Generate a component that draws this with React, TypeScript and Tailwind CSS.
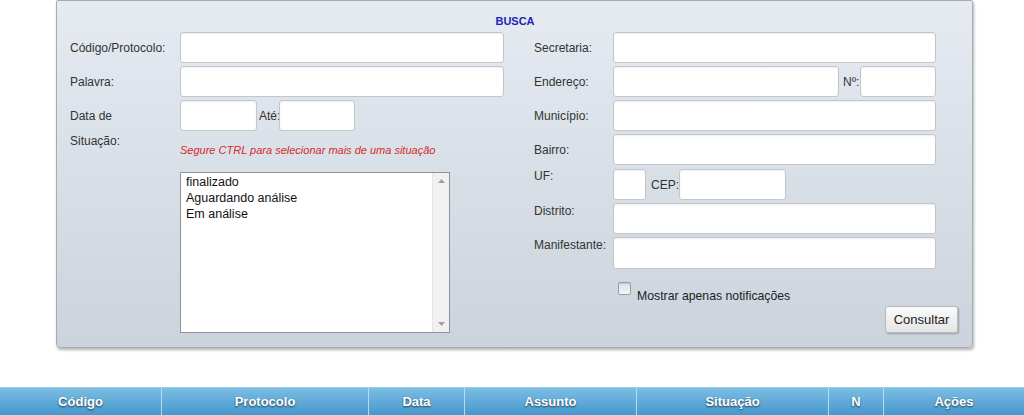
import React from "react";

const inp =
  "h-[31px] bg-white border border-[#c3c7cc] rounded-[3px] shadow-[inset_0_1px_2px_rgba(0,0,0,0.07)] shrink-0";
const lbl = "text-[12px] leading-[14px] text-[#333]";

function Row({ label, lw, children, top }: { label: string; lw: string; children: React.ReactNode; top?: boolean }) {
  return (
    <div className={`flex ${top ? "items-start" : "items-center"}`}>
      <div className={`${lbl} ${lw} shrink-0 ${top ? "pt-[1px]" : ""}`}>{label}</div>
      {children}
    </div>
  );
}

const cols: [string, number][] = [
  ["Código", 162],
  ["Protocolo", 207],
  ["Data", 96],
  ["Assunto", 172],
  ["Situação", 192],
  ["N", 55],
  ["Ações", 140],
];

export default function App() {
  return (
    <div className="w-[1024px] h-[415px] overflow-hidden bg-white font-['Liberation_Sans',Arial,sans-serif]">
      <div className="ml-[56px] w-[917px] h-[348px] rounded-b-[4px] rounded-t-[2px] border border-[#a3abb5] bg-gradient-to-b from-[#e6ebf2] to-[#ccd3dc] shadow-[1px_2px_3px_rgba(0,0,0,0.3)] pt-[13px] pl-[13px]">
        <div className="text-center text-[11px] leading-[14px] font-bold text-[#1f1fb8] pr-[12px]">BUSCA</div>
        <div className="flex mt-[4px]">
          {/* left column */}
          <div className="flex flex-col w-[433px] gap-[3px]">
            <Row label="Código/Protocolo:" lw="w-[110px]">
              <div className={`${inp} w-[324px]`} />
            </Row>
            <Row label="Palavra:" lw="w-[110px]">
              <div className={`${inp} w-[324px]`} />
            </Row>
            <Row label="Data de" lw="w-[110px]">
              <div className={`${inp} w-[77px]`} />
              <span className={`${lbl} ml-[2px] mr-[-1px]`}>Até:</span>
              <div className={`${inp} w-[76px]`} />
            </Row>
            <div className="flex items-start">
              <div className={`${lbl} w-[110px] shrink-0`}>Situação:</div>
              <div className="mt-[9px] text-[11px] leading-[14px] italic text-[#d42a2a]">
                Segure CTRL para selecionar mais de uma situação
              </div>
            </div>
            <div className="ml-[110px] mt-[12px] w-[270px] h-[161px] border border-[#8f9399] bg-white flex">
              <div className="flex-1 pl-[5px] pt-[1px] text-[12.5px] leading-[16px] text-[#111]">
                <div>finalizado</div>
                <div>Aguardando análise</div>
                <div>Em análise</div>
              </div>
              <div className="w-[17px] bg-[#f1f1f1] border-l border-[#e6e6e6] flex flex-col items-center justify-between py-[6px]">
                <svg width="7" height="4" viewBox="0 0 7 4"><path d="M0 4 L3.5 0 L7 4 Z" fill="#a0a0a0" /></svg>
                <svg width="7" height="4" viewBox="0 0 7 4"><path d="M0 0 L3.5 4 L7 0 Z" fill="#a0a0a0" /></svg>
              </div>
            </div>
          </div>
          {/* right column */}
          <div className="flex flex-col ml-[31px] w-[424px] gap-[3px]">
            <Row label="Secretaria:" lw="w-[79px]">
              <div className={`${inp} w-[323px]`} />
            </Row>
            <Row label="Endereço:" lw="w-[79px]">
              <div className={`${inp} w-[226px]`} />
              <span className={`${lbl} ml-[4px] mr-[1px]`}>Nº:</span>
              <div className={`${inp} w-[76px]`} />
            </Row>
            <Row label="Município:" lw="w-[79px]">
              <div className={`${inp} w-[323px]`} />
            </Row>
            <Row label="Bairro:" lw="w-[79px]">
              <div className={`${inp} w-[323px]`} />
            </Row>
            <div className="flex items-start mt-[1px]">
              <div className={`${lbl} w-[79px] shrink-0`}>UF:</div>
              <div className="flex items-center">
                <div className={`${inp} w-[33px]`} />
                <span className={`${lbl} ml-[5px] mr-0`}>CEP:</span>
                <div className={`${inp} w-[107px]`} />
              </div>
            </div>
            <Row label="Distrito:" lw="w-[79px]" top>
              <div className={`${inp} w-[323px]`} />
            </Row>
            <Row label="Manifestante:" lw="w-[79px]" top>
              <div className={`${inp} h-[32px] w-[323px]`} />
            </Row>
            <div className="flex items-start ml-[84px] mt-[10px]">
              <div className="w-[13px] h-[13px] border border-[#9a9ea4] rounded-[2px] bg-gradient-to-b from-[#dcdfe3] to-[#f4f5f6] shadow-[inset_0_1px_1px_rgba(0,0,0,0.1)]" />
              <span className="ml-[6px] mt-[7px] text-[12.25px] leading-[14px] text-[#222]">Mostrar apenas notificações</span>
            </div>
            <div className="flex justify-end mt-0">
              <button className="w-[73px] h-[27px] rounded-[3px] border border-[#b8bcc1] bg-gradient-to-b from-[#fbfbfb] to-[#e4e4e4] shadow-[1px_1px_2px_rgba(0,0,0,0.25)] text-[13px] text-[#222]">
                Consultar
              </button>
            </div>
          </div>
        </div>
      </div>
      <div className="mt-[39px] flex h-[30px] bg-gradient-to-b from-[#7cbde3] to-[#3f95cc] border-t border-[#9ccbe8]">
        {cols.map(([t, w], i) => (
          <div
            key={t}
            style={{ width: w }}
            className={`flex items-start justify-center pt-[4px] text-[13px] font-bold text-white [text-shadow:0_1px_2px_rgba(0,0,0,0.65)] ${
              i < cols.length - 1 ? "border-r border-[#b5d9ee]" : ""
            }`}
          >
            {t}
          </div>
        ))}
      </div>
    </div>
  );
}
